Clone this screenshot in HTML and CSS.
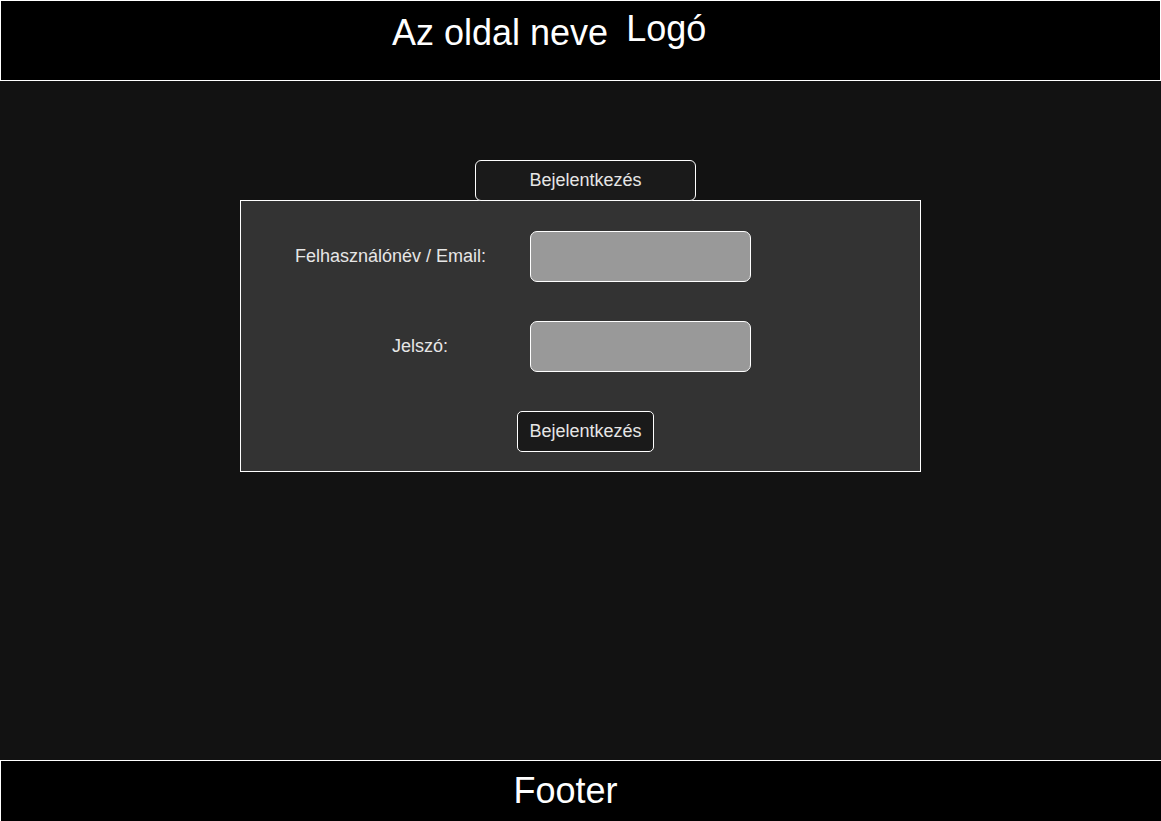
FILE: index.html
```html
<!DOCTYPE html>
<html lang="hu">
<head>
    <meta charset="UTF-8">
    <meta name="viewport" content="width=device-width, initial-scale=1.0">
    <title>Bejelentkezés</title>
    <link rel="stylesheet" href="styles.css">
</head>
<body>
    <div class="header">
        <span class="site-name">Az oldal neve</span>
        <span class="logo">Logó</span>
    </div>

    <div class="main">
        <div class="login-wrap">
            <div class="tab">Bejelentkezés</div>
            <form class="login-box" onsubmit="return false;">
                <div class="form-row">
                    <label class="form-label" for="user">Felhasználónév / Email:</label>
                    <input class="form-input" type="text" id="user">
                </div>
                <div class="form-row">
                    <label class="form-label label-short" for="pass">Jelszó:</label>
                    <input class="form-input" type="password" id="pass">
                </div>
                <div class="form-actions">
                    <button class="login-btn" type="submit">Bejelentkezés</button>
                </div>
            </form>
        </div>
    </div>

    <div class="footer">Footer</div>
</body>
</html>
```

FILE: styles.css
```css
* {
    box-sizing: border-box;
}
body {
    font-family: "Liberation Sans", Arial, sans-serif;
    margin: 0;
    padding: 0;
    background-color: #121212;
    color: white;
    height: 821px;
    display: flex;
    flex-direction: column;
    overflow: hidden;
}
.header {
    height: 81px;
    background-color: #000;
    border: 1px solid white;
    display: flex;
    align-items: flex-start;
    padding: 10px 0 0 391px;
    font-size: 36px;
}
.site-name {
    margin-top: 1px;
}
.logo {
    margin-left: 18px;
    margin-top: -3px;
}
.main {
    flex: 1;
    padding-top: 79px;
    display: flex;
    justify-content: center;
}
.login-wrap {
    width: 681px;
}
.tab {
    width: 221px;
    height: 41px;
    margin-left: 235px;
    margin-bottom: -1px;
    border: 1px solid white;
    border-radius: 6px;
    background-color: #1a1a1a;
    color: #e6e6e6;
    font-size: 18px;
    display: flex;
    align-items: center;
    justify-content: center;
    position: relative;
    z-index: 1;
}
.login-box {
    height: 272px;
    margin: 0;
    background-color: #333;
    border: 1px solid white;
    padding: 30px 0 0 54px;
    display: flex;
    flex-direction: column;
    gap: 39px;
}
.form-row {
    display: flex;
    align-items: center;
}
.form-label {
    width: 235px;
    font-size: 18px;
    color: #e6e6e6;
}
.label-short {
    padding-left: 97px;
}
.form-input {
    width: 221px;
    height: 51px;
    border: 1px solid white;
    border-radius: 7px;
    background-color: #999;
    outline: none;
}
.form-actions {
    padding-left: 222px;
}
.login-btn {
    width: 137px;
    height: 41px;
    border: 1px solid white;
    border-radius: 5px;
    background-color: #1a1a1a;
    color: #e6e6e6;
    font-family: inherit;
    font-size: 18px;
    padding: 0;
}
.footer {
    height: 61px;
    background-color: #000;
    border-top: 1px solid white;
    border-left: 1px solid white;
    font-size: 36px;
    text-align: center;
    padding: 9px 31px 0 0;
}
```
